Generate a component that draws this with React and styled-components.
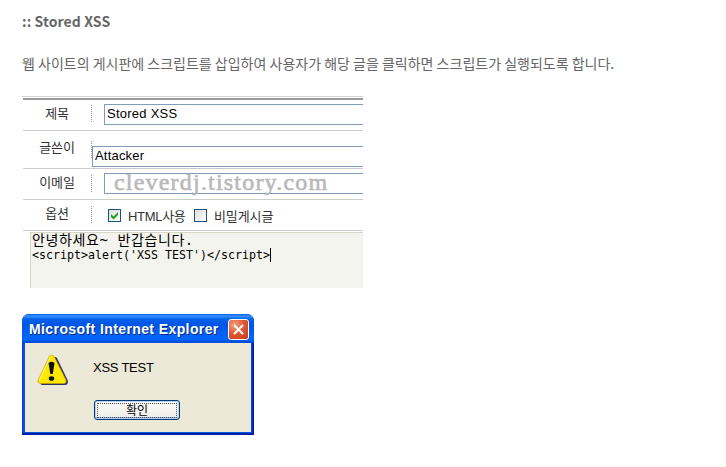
import React from "react";
import styled, { createGlobalStyle } from "styled-components";

const Global = createGlobalStyle`
  * { box-sizing: border-box; }
  body { margin: 0; background: #fff; overflow: hidden; }
  h1, p { margin: 0; }
`;

const Article = styled.main`
  width: 726px;
  height: 467px;
  padding: 11px 0 0 22px;
  color: #666;
  font: 14px/20px "Noto Sans", "Noto Sans CJK KR", sans-serif;
`;

const Heading = styled.h1`
  height: 20px;
  font: 700 14px/20px "Noto Sans CJK KR", sans-serif;
  letter-spacing: 0.1px;
`;

const Paragraph = styled.p`
  margin-top: 22px;
  height: 20px;
  white-space: nowrap;
  font: 14px/20px "Noto Sans CJK KR", sans-serif;
  letter-spacing: ${(p) => p.$spacing}px;
`;

const Form = styled.section`
  position: relative;
  width: 341px;
  height: 192px;
  margin-top: 23px;
  overflow: hidden;
  border-top: 1px solid #d3d3d3;
  color: #333;
  font: 13px/16px "Liberation Sans", "Noto Sans CJK KR", sans-serif;
`;

const TopRule = styled.div`
  height: 2px;
  margin: 1px 0 0 1px;
  background: #999;
`;

const Row = styled.div`
  display: flex;
  height: ${(p) => p.$height}px;
  margin-left: 1px;
  border-bottom: 1px solid #ccc;
`;

const Label = styled.div`
  width: 68px;
  padding-top: ${(p) => p.$top}px;
  text-align: center;
  font-size: 13px;
  line-height: 16px;
  letter-spacing: -0.2px;
`;

const Divider = styled.div`
  width: 1px;
  height: ${(p) => p.$height}px;
  margin-top: ${(p) => p.$top}px;
  background: repeating-linear-gradient(#999 0 1px, #fff 1px 2px);
`;

const Input = styled.div`
  flex: 1;
  height: 21px;
  margin: ${(p) => p.$top}px 0 0 ${(p) => p.$left}px;
  padding-left: 2px;
  border: 1px solid #7f9db9;
  border-right: 0;
  background: #fff;
  color: #000;
  font-size: 13px;
  line-height: 18px;
  letter-spacing: ${(p) => p.$spacing || 0}px;
`;

const Watermark = styled.div`
  position: absolute;
  left: 92px;
  top: 71px;
  color: #b9b9b9;
  font: 400 24px/28px "Liberation Serif", serif;
  letter-spacing: 1.2px;
  white-space: nowrap;
  -webkit-text-stroke: 0.6px #b9b9b9;
`;

const Options = styled.div`
  display: flex;
  padding: 9px 0 0 16px;
`;

const Box = styled.span`
  display: block;
  width: 13px;
  height: 13px;
  border: 1px solid #1c5180;
  background: linear-gradient(135deg, #dcdcd7, #fff);
  svg { display: block; }
`;

const OptionText = styled.span`
  width: ${(p) => p.$width}px;
  margin-left: 7px;
  white-space: nowrap;
  letter-spacing: ${(p) => p.$spacing}px;
`;

const Editor = styled.div`
  height: 56px;
  margin: 1px 0 0 8px;
  padding-left: 1px;
  border: solid #d8d8c8;
  border-width: 1px 0 0 1px;
  background: #f4f4ee;
  color: #000;
`;

const EditorLine = styled.div`
  display: flex;
  height: ${(p) => p.$height}px;
  font: ${(p) => p.$size}px/${(p) => p.$height}px "DejaVu Sans Mono", "Noto Sans CJK KR", monospace;
  letter-spacing: ${(p) => p.$spacing}px;
  white-space: pre;
`;

const Caret = styled.i`
  width: 1px;
  height: 14px;
  background: #000;
`;

const Dialog = styled.section`
  width: 232px;
  height: 121px;
  margin-top: 26px;
  padding: 0 3px 3px;
  border-radius: 7px 7px 0 0;
  background: linear-gradient(90deg, #0831d9, #0855dd 2px, #0855dd 229px, #001ea0 231px);
  box-shadow: inset 0 -2px #0420a8;
  overflow: hidden;
  color: #000;
`;

const TitleBar = styled.header`
  display: flex;
  justify-content: space-between;
  height: 29px;
  margin: 0 -3px;
  padding: 5px 5px 0 7px;
  background: linear-gradient(#0058e6 0, #3a93ff 2px, #0562ed 5px, #0054e3 11px, #0060f5 19px, #0066ff 25px, #0047cf 29px);
  color: #fff;
  font: 700 14px/20px "Liberation Sans", sans-serif;
  letter-spacing: ${(p) => p.$spacing}px;
  text-shadow: 1px 1px #0b2b83;
  white-space: nowrap;
`;

const Close = styled.span`
  display: flex;
  align-items: center;
  justify-content: center;
  width: 21px;
  height: 21px;
  border: 1px solid #fff;
  border-radius: 3px;
  background: radial-gradient(circle at 30% 25%, #f1a184, #e15a37 45%, #c43817);
`;

const DialogBody = styled.div`
  display: grid;
  grid-template-columns: 69px 1fr;
  grid-template-rows: 57px 1fr;
  height: 89px;
  background: #ece9d8;
`;

const Alert = styled.svg`
  margin: 11px 0 0 12px;
`;

const Message = styled.p`
  padding-top: 17px;
  margin-left: -1px;
  font: 13px/16px "Liberation Sans", sans-serif;
  letter-spacing: -0.25px;
`;

const Confirm = styled.button`
  grid-column: 2;
  width: 86px;
  height: 20px;
  padding: 1px;
  margin: 0;
  border: 1px solid #003c74;
  border-radius: 3px;
  background: linear-gradient(#fff, #ecebe6);
  box-shadow: inset 0 0 0 1px #bbd0f0, inset 0 -2px #89ade4;
  color: #000;
  font: 12px/13px "Noto Sans CJK KR", sans-serif;
`;

const Focus = styled.span`
  display: block;
  height: 15px;
  margin: 0 1px;
  border: 1px dotted #555;
  line-height: 11px;
`;

export default function App() {
  return (
    <>
      <Global />
      <Article>
        <Heading>:: Stored XSS</Heading>
        <Paragraph $spacing={0}>
          웹 사이트의 게시판에 스크립트를 삽입하여 사용자가 해당 글을 클릭하면 스크립트가 실행되도록 합니다.
        </Paragraph>
        <Form>
          <TopRule />
          <Row $height={31}>
            <Label $top={6}>제목</Label>
            <Divider $top={5} $height={18} />
            <Input $top={4} $left={12} $spacing={0.25}>Stored XSS</Input>
          </Row>
          <Row $height={38}>
            <Label $top={9}>글쓴이</Label>
            <Divider $top={10} $height={18} />
            <Input $top={15} $left={0} $spacing={0.2}>Attacker</Input>
          </Row>
          <Row $height={31}>
            <Label $top={6}>이메일</Label>
            <Divider $top={6} $height={18} />
            <Input $top={4} $left={12} />
          </Row>
          <Row $height={31}>
            <Label $top={6}>옵션</Label>
            <Divider $top={6} $height={18} />
            <Options>
              <Box>
                <svg width="11" height="11" viewBox="0 0 11 11">
                  <path d="M2 4v3l2.5 2.5L9 5V2L4.5 6.5z" fill="#21a121" />
                </svg>
              </Box>
              <OptionText $width={66} $spacing={-0.3}>HTML사용</OptionText>
              <Box />
              <OptionText $width={66} $spacing={-0.1}>비밀게시글</OptionText>
            </Options>
          </Row>
          <Editor>
            <EditorLine $height={15} $size={14} $spacing={0.6}>안녕하세요~ 반갑습니다.</EditorLine>
            <EditorLine $height={15} $size={11.63} $spacing={0}>
              {"<script>alert('XSS TEST')</script>"}<Caret />
            </EditorLine>
          </Editor>
          <Watermark>cleverdj.tistory.com</Watermark>
        </Form>
        <Dialog>
          <TitleBar $spacing={0.4}>
            Microsoft Internet Explorer
            <Close>
              <svg width="13" height="13" viewBox="0 0 13 13">
                <path d="M2 2l9 9M11 2l-9 9" stroke="#fff" strokeWidth="2" />
              </svg>
            </Close>
          </TitleBar>
          <DialogBody>
            <Alert width="33" height="33" viewBox="0 0 33 33">
              <path d="M16 4q2-2 4 0l11 23q0 4-3 4H5q-2-1-2-2z" fill="#2e3068" />
              <path d="M12.5 2.2q2-2.3 4.5 0L29 26.2q.5 3.3-2 3.3H3q-2.7-.5-2-3.3z" fill="#ffe800" stroke="#c8a400" strokeWidth=".7" />
              <path d="M13 3.5L2.5 26" stroke="#fff98a" fill="none" />
              <path d="M11.5 9q3-2.5 6 0L15.8 20h-2.5z" fill="#111" />
              <ellipse cx="14.5" cy="24.5" rx="2.7" ry="2.3" fill="#111" />
            </Alert>
            <Message>XSS TEST</Message>
            <Confirm><Focus>확인</Focus></Confirm>
          </DialogBody>
        </Dialog>
      </Article>
    </>
  );
}
